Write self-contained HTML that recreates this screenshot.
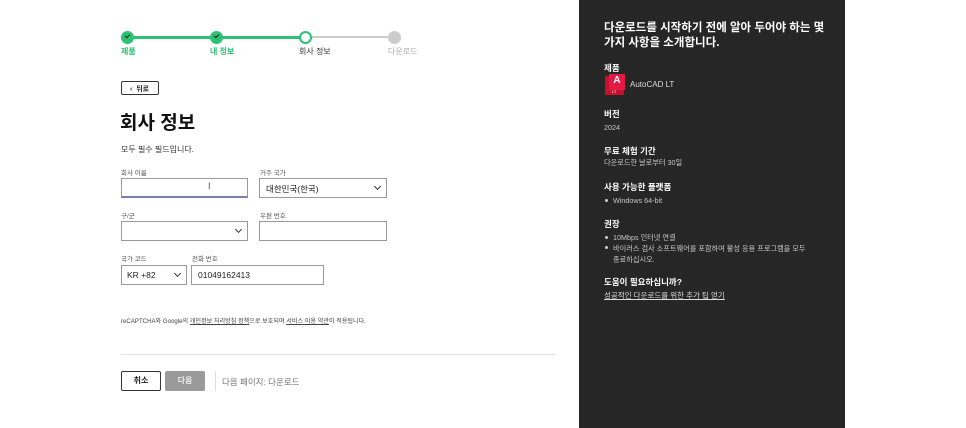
<!DOCTYPE html>
<html><head><meta charset="utf-8"><style>
*{margin:0;padding:0;box-sizing:border-box}
body{width:966px;height:428px;background:#fff;position:relative;overflow:hidden;font-family:"Liberation Sans","Noto Sans CJK KR",sans-serif;color:#222}
.a{position:absolute;white-space:nowrap}
.lbl{font-size:6.5px;color:#555}
.inp{position:absolute;border:1px solid #999;background:#fff;height:20px}
.chev{position:absolute;right:6px;top:5px;width:5px;height:5px;border-right:1.3px solid #333;border-bottom:1.3px solid #333;transform:rotate(45deg)}
.dk{position:absolute;left:579px;top:0;width:266px;height:428px;background:#262626;color:#fff}
.dk .a{color:#fff}
.h{font-size:8.5px;font-weight:bold}
.s{font-size:7.2px;color:#c8c8c8!important}
.dot{position:absolute;width:3px;height:3px;border-radius:50%;background:#ccc}
</style></head><body>
<div class="a" style="left:127px;top:36px;width:178px;height:2.5px;background:#2bc275"></div>
<div class="a" style="left:305px;top:36px;width:89px;height:2px;background:#ccc"></div>
<div class="a" style="left:121px;top:31px;width:13px;height:13px;border-radius:50%;background:#2bc275"></div>
<div class="a" style="left:210px;top:31px;width:13px;height:13px;border-radius:50%;background:#2bc275"></div>
<div class="a" style="left:125px;top:34px;width:5px;height:3px;border-left:1.4px solid #222;border-bottom:1.4px solid #222;transform:rotate(-45deg)"></div>
<div class="a" style="left:214px;top:34px;width:5px;height:3px;border-left:1.4px solid #222;border-bottom:1.4px solid #222;transform:rotate(-45deg)"></div>
<div class="a" style="left:299px;top:31px;width:13px;height:13px;border-radius:50%;background:#fff;border:2px solid #2bc275"></div>
<div class="a" style="left:388px;top:31px;width:13px;height:13px;border-radius:50%;background:#ccc"></div>
<div class="a" style="left:121px;top:46px;font-size:8px;color:#2bc275;font-weight:bold">제품</div>
<div class="a" style="left:210px;top:46px;font-size:8px;color:#2bc275;font-weight:bold">내 정보</div>
<div class="a" style="left:299px;top:46px;font-size:8px;color:#333">회사 정보</div>
<div class="a" style="left:388px;top:46px;font-size:8px;color:#aaa">다운로드</div>
<div class="a" style="left:121px;top:81px;width:38px;height:14px;border:1px solid #333;border-radius:2px;font-size:7px;font-weight:bold;padding:2px 0 0 8px">‹&nbsp; 뒤로</div>
<div class="a" style="left:120px;top:108px;font-size:19px;font-weight:bold;color:#111">회사 정보</div>
<div class="a" style="left:121px;top:144px;font-size:8px;color:#333">모두 필수 필드입니다.</div>
<div class="a lbl" style="left:121px;top:167px">회사 이름</div>
<div class="inp" style="left:121px;top:178px;width:127px;border-bottom:2px solid #7b7bb0"><span class="a" style="left:86px;top:2px;font-size:9px;color:#555">I</span></div>
<div class="a lbl" style="left:260px;top:167px">거주 국가</div>
<div class="inp" style="left:259px;top:178px;width:128px"><span class="a" style="left:6px;top:4px;font-size:8.5px">대한민국(한국)</span><i class="chev"></i></div>
<div class="a lbl" style="left:121px;top:210px">구/군</div>
<div class="inp" style="left:121px;top:221px;width:127px"><i class="chev"></i></div>
<div class="a lbl" style="left:260px;top:210px">우편 번호</div>
<div class="inp" style="left:259px;top:221px;width:128px"></div>
<div class="a lbl" style="left:121px;top:253px">국가 코드</div>
<div class="inp" style="left:121px;top:265px;width:66px"><span class="a" style="left:5px;top:4px;font-size:8.5px">KR +82</span><i class="chev"></i></div>
<div class="a lbl" style="left:192px;top:253px">전화 번호</div>
<div class="inp" style="left:191px;top:265px;width:133px"><span class="a" style="left:6px;top:4px;font-size:8.5px">01049162413</span></div>
<div class="a" style="left:121px;top:316px;font-size:6.1px;color:#444">reCAPTCHA와 Google의 <u>개인정보 처리방침 정책</u>으로 보호되며 <u>서비스 이용 약관</u>이 적용됩니다.</div>
<div class="a" style="left:121px;top:354px;width:435px;height:1px;background:#e3e3e3"></div>
<div class="a" style="left:121px;top:371px;width:40px;height:20px;border:1px solid #333;border-radius:2px;font-size:8px;font-weight:bold;text-align:center;line-height:18px">취소</div>
<div class="a" style="left:165px;top:371px;width:40px;height:20px;background:#9a9a9a;border-radius:2px;font-size:8px;font-weight:bold;color:#eee;text-align:center;line-height:20px">다음</div>
<div class="a" style="left:215px;top:371px;width:1px;height:20px;background:#ddd"></div>
<div class="a" style="left:222px;top:376px;font-size:8.5px;color:#777">다음 페이지: 다운로드</div>
<div class="dk">
<div class="a" style="left:25px;top:21px;font-size:11.5px;font-weight:bold;line-height:15px">다운로드를 시작하기 전에 알아 두어야 하는 몇<br>가지 사항을 소개합니다.</div>
<div class="a h" style="left:25px;top:62px">제품</div>
<div class="a" style="left:26px;top:76px;width:19px;height:19px;background:#c8102e;border-radius:1px"></div>
<div class="a" style="left:30px;top:74px;width:16px;height:16px;background:#e31b44;color:#fff;font-size:10px;font-weight:bold;text-align:center;line-height:14px">A</div>
<div class="a" style="left:33px;top:89px;font-size:4px;color:#fff">LT</div>
<div class="a" style="left:51px;top:80px;font-size:8px;color:#ddd">AutoCAD LT</div>
<div class="a h" style="left:25px;top:108px">버전</div>
<div class="a s" style="left:25px;top:123px">2024</div>
<div class="a h" style="left:25px;top:145px">무료 체험 기간</div>
<div class="a s" style="left:25px;top:158px">다운로드한 날로부터 30일</div>
<div class="a h" style="left:25px;top:181px">사용 가능한 플랫폼</div>
<div class="dot" style="left:26px;top:199px"></div>
<div class="a s" style="left:34px;top:196px">Windows 64-bit</div>
<div class="a h" style="left:25px;top:218px">권장</div>
<div class="dot" style="left:26px;top:236px"></div>
<div class="a s" style="left:34px;top:233px">10Mbps 인터넷 연결</div>
<div class="dot" style="left:26px;top:246px"></div>
<div class="a s" style="left:34px;top:243px;line-height:11px">바이러스 검사 소프트웨어를 포함하여 활성 응용 프로그램을 모두<br>종료하십시오.</div>
<div class="a h" style="left:25px;top:276px">도움이 필요하십니까?</div>
<div class="a" style="left:25px;top:290px;font-size:7.5px;color:#ddd;text-decoration:underline">성공적인 다운로드를 위한 추가 팁 얻기</div>
</div>
</body></html>
